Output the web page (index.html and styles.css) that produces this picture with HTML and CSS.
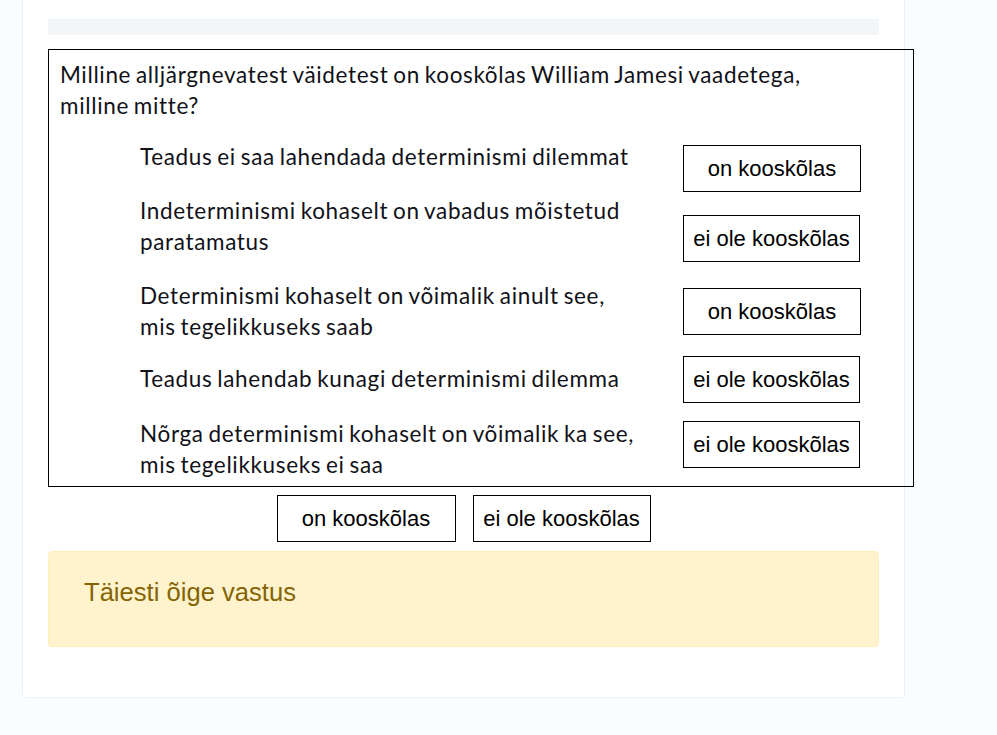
FILE: index.html
```html
<!DOCTYPE html>
<html lang="et">
<head>
<meta charset="utf-8">
<title>Küsimus</title>
<link rel="stylesheet" href="styles.css">
</head>
<body>
<div class="card">
  <div class="bar"></div>
  <div class="question">
    <p class="qtext">Milline alljärgnevatest väidetest on kooskõlas William Jamesi vaadetega,<br>milline mitte?</p>
    <div class="pairs">
      <div class="stmt">Teadus ei saa lahendada determinismi dilemmat</div>
      <div class="drop d1">on kooskõlas</div>
      <div class="stmt">Indeterminismi kohaselt on vabadus mõistetud<br>paratamatus</div>
      <div class="drop d2">ei ole kooskõlas</div>
      <div class="stmt">Determinismi kohaselt on võimalik ainult see,<br>mis tegelikkuseks saab</div>
      <div class="drop d3">on kooskõlas</div>
      <div class="stmt s4">Teadus lahendab kunagi determinismi dilemma</div>
      <div class="drop d4">ei ole kooskõlas</div>
      <div class="stmt">Nõrga determinismi kohaselt on võimalik ka see,<br>mis tegelikkuseks ei saa</div>
      <div class="drop d5">ei ole kooskõlas</div>
    </div>
  </div>
  <div class="options">
    <div class="option">on kooskõlas</div>
    <div class="option">ei ole kooskõlas</div>
  </div>
  <div class="alert">Täiesti õige vastus</div>
</div>
</body>
</html>
```

FILE: styles.css
```css
html, body {
  margin: 0;
  padding: 0;
  background: #fbfcfe;
}
body {
  font-family: "Liberation Sans", Arial, sans-serif;
  color: #000;
}
.card {
  width: 883px;
  box-sizing: border-box;
  margin-left: 22px;
  background: #fff;
  border: 1px solid #eef0f3;
  border-top: none;
  border-radius: 0 0 4px 4px;
  padding: 19px 25px 50px 25px;
}
.bar {
  height: 16px;
  background: #f3f6f9;
}
.question {
  margin-top: 14px;
  width: 866px;
  box-sizing: border-box;
  border: 1px solid #000;
  padding: 10px 0 5px 11px;
  font-family: Lato, "Open Sans", sans-serif;
  font-size: 22.5px;
  line-height: 30.5px;
  letter-spacing: 0.65px;
  word-spacing: -1.5px;
  color: #111118;
}
.qtext {
  margin: 0;
}
.pairs {
  margin-top: 21px;
  margin-left: 80px;
  display: grid;
  grid-template-columns: 543px 178px;
  grid-template-rows: 54px 85px 75px 63px 62px;
}
.stmt {
  align-self: start;
  white-space: nowrap;
}
.s4 {
  margin-top: 8px;
}
.drop {
  align-self: start;
  height: 47px;
  box-sizing: border-box;
  border: 1px solid #000;
  display: flex;
  align-items: center;
  justify-content: center;
  font-family: "Liberation Sans", Arial, sans-serif;
  font-size: 22px;
  line-height: 1;
  letter-spacing: 0;
  word-spacing: 0;
  color: #000;
}
.d1 { margin-top: 3px; }
.d2 { margin-top: 19px; width: 177px; }
.d3 { margin-top: 7px; }
.d4 { margin-top: 0; width: 177px; }
.d5 { margin-top: 2px; width: 177px; }
.options {
  margin-top: 8px;
  display: flex;
  justify-content: center;
  gap: 17px;
}
.option {
  width: 179px;
  height: 47px;
  box-sizing: border-box;
  border: 1px solid #000;
  display: flex;
  align-items: center;
  justify-content: center;
  font-size: 22px;
  line-height: 1;
  background: #fff;
}
.option + .option {
  width: 178px;
}
.alert {
  margin-top: 9px;
  background: #fff3cd;
  border: 1px solid #ffeeba;
  border-radius: 4px;
  color: #856404;
  font-size: 25.6px;
  line-height: 30px;
  padding: 25px 35px 39px 35px;
}
```
